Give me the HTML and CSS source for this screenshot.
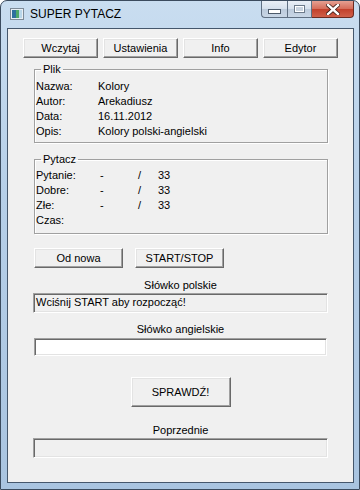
FILE: index.html
```html
<!DOCTYPE html>
<html lang="pl">
<head>
  <meta charset="UTF-8" />
  <title>SUPER PYTACZ</title>
  <link rel="stylesheet" href="styles.css">
</head>
<body>
  <div class="window">
    <div class="titlebar">
      <svg class="app-icon" width="14" height="12" viewBox="0 0 14 12">
        <rect x="0.5" y="0.5" width="13" height="11" fill="#e8eef4" stroke="#7d8a97"/>
        <rect x="2" y="2" width="4" height="8" fill="#2f6f9e"/>
        <rect x="6" y="2" width="3" height="8" fill="#4fa86a"/>
        <rect x="9" y="2" width="3" height="8" fill="#b9d6e9"/>
      </svg>
      <span class="title">SUPER PYTACZ</span>
      <div class="caption">
        <div class="cap-btn cap-min"><span class="glyph-min"></span></div>
        <div class="cap-btn cap-max"><span class="glyph-max"></span></div>
        <div class="cap-btn cap-close">
          <svg width="14" height="11" viewBox="0 0 14 11">
            <path d="M2 1 L12 10 M12 1 L2 10" stroke="#3b1a14" stroke-width="4" stroke-linecap="square"/>
            <path d="M2 1 L12 10 M12 1 L2 10" stroke="#fff" stroke-width="2.4" stroke-linecap="square"/>
          </svg>
        </div>
      </div>
    </div>

    <div class="client">
      <div class="menu-row">
        <button class="win-btn">Wczytaj</button>
        <button class="win-btn">Ustawienia</button>
        <button class="win-btn">Info</button>
        <button class="win-btn">Edytor</button>
      </div>

      <fieldset class="group group-plik">
        <legend>Plik</legend>
        <div class="info-grid">
          <span>Nazwa:</span><span>Kolory</span>
          <span>Autor:</span><span>Arekadiusz</span>
          <span>Data:</span><span>16.11.2012</span>
          <span>Opis:</span><span>Kolory polski-angielski</span>
        </div>
      </fieldset>

      <fieldset class="group group-pytacz">
        <legend>Pytacz</legend>
        <div class="stat-grid">
          <span>Pytanie:</span><span>-</span><span>/</span><span>33</span>
          <span>Dobre:</span><span>-</span><span>/</span><span>33</span>
          <span>Złe:</span><span>-</span><span>/</span><span>33</span>
          <span>Czas:</span><span></span><span></span><span></span>
        </div>
      </fieldset>

      <div class="control-row">
        <button class="win-btn wide">Od nowa</button>
        <button class="win-btn wide">START/STOP</button>
      </div>

      <div class="field-label label-pl">Słówko polskie</div>
      <div class="textbox readonly">Wciśnij START aby rozpocząć!</div>

      <div class="field-label label-en">Słówko angielskie</div>
      <div class="textbox editable"></div>

      <button class="win-btn check">SPRAWDŹ!</button>

      <div class="field-label label-prev">Poprzednie</div>
      <div class="textbox readonly"></div>
    </div>
  </div>
</body>
</html>
```

FILE: styles.css
```css
body { margin: 0; background: #fff; font-family: "Liberation Sans", Arial, sans-serif; font-size: 11px; color: #000; }

.window { width: 360px; height: 490px; box-sizing: border-box; display: flex; flex-direction: column; border: 1px solid #3b4b5e; border-radius: 7px 7px 0 0; background: linear-gradient(180deg, #c9ddf0 0%, #b6cfe8 40%, #a9c4e0 100%); overflow: hidden; }

.titlebar { height: 27px; display: flex; align-items: flex-start; flex-shrink: 0; }
.app-icon { margin: 7px 0 0 9px; }
.title { margin: 6px 0 0 6px; font-size: 12px; color: #000; }
.caption { margin-left: auto; margin-right: 5px; display: flex; height: 18px; }
.cap-btn { height: 17px; display: flex; align-items: center; justify-content: center; box-sizing: border-box; border: 1px solid #5f6f82; border-top: none; }
.cap-min { width: 26px; border-radius: 0 0 0 4px; border-right: none; background: linear-gradient(180deg, #e9eff6 0%, #d5e0ec 50%, #bccbdc 51%, #c8d6e6 100%); }
.cap-max { width: 25px; background: linear-gradient(180deg, #e9eff6 0%, #d5e0ec 50%, #bccbdc 51%, #c8d6e6 100%); }
.cap-close { width: 42px; border-left: none; border-radius: 0 0 4px 0; border-color: #6b2a20; background: linear-gradient(180deg, #e5a092 0%, #d56b58 50%, #c2402b 51%, #d0604a 100%); }
.glyph-min { width: 11px; height: 3px; border: 1px solid #4d5b6b; background: #fff; margin-top: 5px; }
.glyph-max { width: 9px; height: 6px; border: 1px solid #6d7b8b; box-shadow: inset 0 0 0 1px #fff; background: #c9d4e0; }

.client { flex: 1; margin: 0 5px 6px 6px; border: 1px solid #45576c; background: #f0f0f0; display: flex; flex-direction: column; align-items: stretch; }

.win-btn { font: inherit; color: #000; height: 20px; padding: 0; background: #f0f0f0; border: 1px solid; border-color: #fff #696969 #696969 #fff; box-shadow: inset -1px -1px 0 #a0a0a0, inset 1px 1px 0 #e3e3e3; }

.menu-row { display: flex; gap: 5px; margin: 9px 0 0 15px; }
.menu-row .win-btn { width: 75px; }

.group { margin: 4px 25px 0 26px; padding: 0 1px 4px 1px; border: 1px solid #a0a0a0; box-shadow: 1px 1px 0 #fff, inset 1px 1px 0 #fff; }
.group legend { margin-left: 5px; padding: 0 2px; line-height: 14px; }
.group-pytacz { margin-top: 9px; padding-bottom: 6px; }

.info-grid { display: grid; grid-template-columns: 62px 1fr; grid-auto-rows: 15px; align-items: center; padding-top: 2px; }
.stat-grid { display: grid; grid-template-columns: 64px 38px 20px 1fr; grid-auto-rows: 15px; align-items: center; padding-top: 1px; }

.control-row { display: flex; gap: 12px; margin: 14px 0 0 26px; }
.control-row .wide { width: 89px; }

.field-label { text-align: center; line-height: 13px; }
.label-pl { margin-top: 11px; }
.label-en { margin-top: 10px; }
.label-prev { margin-top: 17px; }

.textbox { margin: 1px 25px 0 25px; height: 20px; box-sizing: border-box; border: 1px solid; border-color: #a0a0a0 #fff #fff #a0a0a0; box-shadow: inset 1px 1px 0 #696969, inset -1px -1px 0 #e3e3e3; padding: 2px 0 0 2px; white-space: nowrap; }
.textbox.readonly { background: #f0f0f0; }
.textbox.editable { background: #fff; height: 18px; margin-top: 2px; margin-right: 26px; margin-left: 26px; }

.check { width: 100px; height: 30px; align-self: center; margin-top: 21px; }
```
